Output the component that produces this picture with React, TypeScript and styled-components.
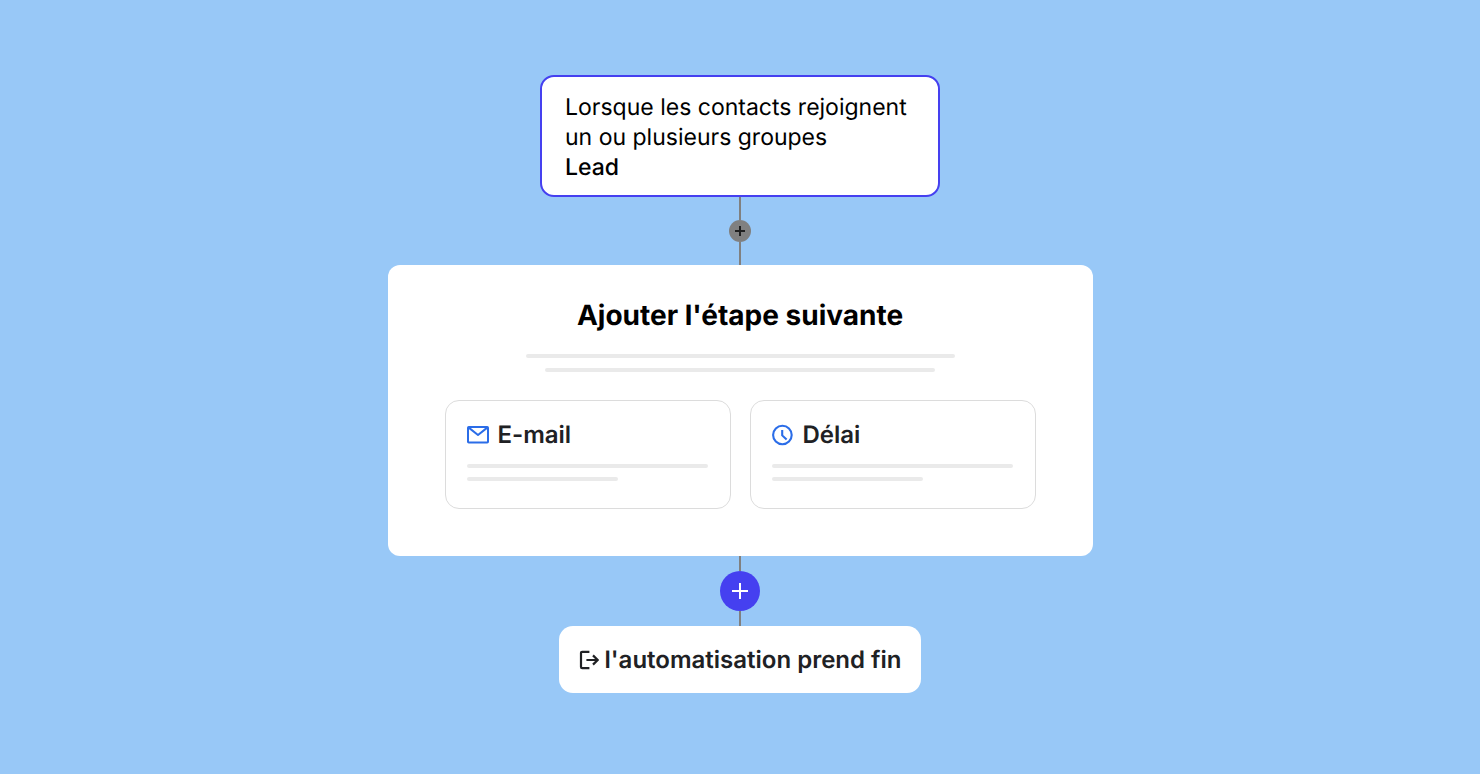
import React from "react";
import styled, { createGlobalStyle } from "styled-components";

const GlobalStyle = createGlobalStyle`
  *, *::before, *::after { box-sizing: border-box; }
  body {
    margin: 0;
    background: #98c8f7;
    font-family: Inter, "Liberation Sans", sans-serif;
    color: #202124;
    text-rendering: geometricPrecision;
  }
  h2, p { margin: 0; }
  button { font: inherit; color: inherit; text-rendering: inherit; cursor: pointer; }
`;

const Flow = styled.main`
  display: flex;
  flex-direction: column;
  align-items: center;
  min-height: 100vh;
  padding: 75px 24px;
`;

const Trigger = styled.section`
  width: 100%;
  max-width: 400px;
  padding: 15px 23px 13px;
  border: 2px solid #4540f0;
  border-radius: 14px;
  background: #fff;
  color: #000;
  font-size: 23px;
  font-weight: 400;
  line-height: 30px;
`;

const GroupName = styled.strong`
  display: block;
  font-weight: 500;
`;

const Connector = styled.div<{ $length: number }>`
  width: 2px;
  height: ${(p) => p.$length}px;
  background: #808080;
`;

const AddButton = styled.button<{ $size: number; $fill: string; $ink: string }>`
  display: flex;
  align-items: center;
  justify-content: center;
  width: ${(p) => p.$size}px;
  height: ${(p) => p.$size}px;
  padding: 0;
  border: 0;
  border-radius: 50%;
  background: ${(p) => p.$fill};
  color: ${(p) => p.$ink};
`;

const StepPanel = styled.section`
  display: flex;
  flex-direction: column;
  align-items: center;
  width: 100%;
  max-width: 705px;
  padding: 32px 57px 47px;
  border-radius: 12px;
  background: #fff;
`;

const Title = styled.h2`
  color: #000;
  font-size: 28px;
  font-weight: 700;
  line-height: 36px;
`;

const Lines = styled.div<{ $gap: number; $centered?: boolean }>`
  display: flex;
  flex-direction: column;
  align-items: ${(p) => (p.$centered ? "center" : "flex-start")};
  gap: ${(p) => p.$gap}px;
  width: 100%;
`;

const Line = styled.span<{ $width: number }>`
  width: ${(p) => p.$width}px;
  max-width: 100%;
  height: 4px;
  border-radius: 2px;
  background: #eaeaea;
`;

const Summary = styled.div`
  width: 100%;
  padding: 21px 0 28px;
`;

const Options = styled.div`
  display: grid;
  grid-template-columns: 1fr 1fr;
  gap: 19px;
  width: 100%;
`;

const Option = styled.button`
  display: flex;
  flex-direction: column;
  gap: 14px;
  padding: 19px 21px 27px;
  border: 1px solid #dcdcdc;
  border-radius: 14px;
  background: #fff;
  text-align: left;
`;

const OptionLabel = styled.span`
  display: flex;
  align-items: center;
  gap: 9px;
  font-size: 24px;
  font-weight: 600;
  line-height: 30px;

  svg { color: #2b6de8; }
`;

const EndCard = styled.section`
  display: flex;
  align-items: center;
  gap: 6px;
  padding: 19px 20px 18px;
  border-radius: 14px;
  background: #fff;
  font-size: 24px;
  font-weight: 600;
  line-height: 30px;
`;

const PlusIcon = ({ size, stroke }: { size: number; stroke: number }) => (
  <svg width={size} height={size} viewBox={`0 0 ${size} ${size}`} aria-hidden="true">
    <path
      d={`M${size / 2} 0V${size}M0 ${size / 2}H${size}`}
      stroke="currentColor"
      strokeWidth={stroke}
    />
  </svg>
);

const MailIcon = () => (
  <svg width="22" height="22" viewBox="0 0 22 22" fill="none" stroke="currentColor" strokeWidth="2" strokeLinejoin="round" aria-hidden="true">
    <rect x="1" y="3" width="20" height="15.6" rx="0.8" />
    <path d="M1.4 3.4L11 11L20.6 3.4" />
  </svg>
);

const ClockIcon = () => (
  <svg width="22" height="22" viewBox="0 0 22 22" fill="none" stroke="currentColor" strokeWidth="2.1" aria-hidden="true">
    <circle cx="10.4" cy="11" r="9.3" />
    <path d="M10.2 6V11.4L14.6 15.6" />
  </svg>
);

const ExitIcon = () => (
  <svg width="20" height="20" viewBox="0 0 20 20" fill="none" stroke="currentColor" strokeWidth="2.2" aria-hidden="true">
    <path d="M10.4 1.8H3.2Q2 1.8 2 3V17Q2 18.2 3.2 18.2H10.4" />
    <path d="M7.4 10H18.4M14 5.4L18.6 10L14 14.6" />
  </svg>
);

const options = [
  { label: "E-mail", Icon: MailIcon },
  { label: "Délai", Icon: ClockIcon },
];

export default function App() {
  return (
    <>
      <GlobalStyle />
      <Flow>
        <Trigger>
          <p>Lorsque les contacts rejoignent un ou plusieurs groupes</p>
          <GroupName>Lead</GroupName>
        </Trigger>
        <Connector $length={23} />
        <AddButton type="button" aria-label="Ajouter" $size={22} $fill="#808080" $ink="#202020">
          <PlusIcon size={10} stroke={2} />
        </AddButton>
        <Connector $length={23} />
        <StepPanel>
          <Title>Ajouter l'étape suivante</Title>
          <Summary>
            <Lines $gap={10} $centered>
              <Line $width={429} />
              <Line $width={390} />
            </Lines>
          </Summary>
          <Options>
            {options.map(({ label, Icon }) => (
              <Option type="button" key={label}>
                <OptionLabel>
                  <Icon />
                  {label}
                </OptionLabel>
                <Lines as="span" $gap={9}>
                  <Line $width={241} />
                  <Line $width={151} />
                </Lines>
              </Option>
            ))}
          </Options>
        </StepPanel>
        <Connector $length={15} />
        <AddButton type="button" aria-label="Ajouter" $size={40} $fill="#4540f0" $ink="#fff">
          <PlusIcon size={16} stroke={2} />
        </AddButton>
        <Connector $length={15} />
        <EndCard>
          <ExitIcon />
          <span>l'automatisation prend fin</span>
        </EndCard>
      </Flow>
    </>
  );
}
